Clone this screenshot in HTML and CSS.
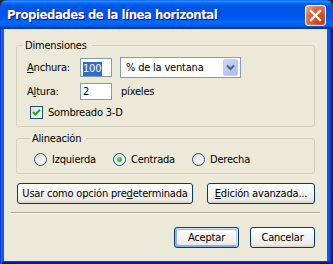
FILE: index.html
```html
<!DOCTYPE html>
<html lang="es">
<head>
<meta charset="utf-8">
<title>Propiedades de la línea horizontal</title>
<link rel="stylesheet" href="styles.css">
</head>
<body>
<div class="window">
  <div class="titlebar">
    <span class="title">Propiedades de la línea horizontal</span>
    <button class="close" aria-label="Cerrar"><svg width="19" height="19" viewBox="0 0 19 19"><path d="M5 5 L14 14 M14 5 L5 14" stroke="#fff" stroke-width="2.4" stroke-linecap="square"/></svg></button>
  </div>
  <div class="frame">
    <div class="client">
      <fieldset class="group group-dims">
        <legend>Dimensiones</legend>
        <div class="row row-width">
          <span class="lbl"><u>A</u>nchura:</span>
          <div class="edit"><span class="sel">100</span></div>
          <div class="combo">
            <span class="combo-text">% de la ventana</span>
            <span class="combo-btn"><svg width="9" height="7" viewBox="0 0 9 7"><path d="M1 1.5 L4.5 5 L8 1.5" fill="none" stroke="#4D6185" stroke-width="2"/></svg></span>
          </div>
        </div>
        <div class="row row-height">
          <span class="lbl">A<u>l</u>tura:</span>
          <div class="edit edit-small">2</div>
          <span class="unit">píxeles</span>
        </div>
        <div class="row row-check">
          <span class="checkbox"><svg width="11" height="11" viewBox="0 0 11 11"><path d="M2 5 L4.3 7.5 L9 2.8" fill="none" stroke="#21A121" stroke-width="2"/></svg></span>
          <span class="check-label">Sombreado 3-D</span>
        </div>
      </fieldset>
      <fieldset class="group group-align">
        <legend>Alineación</legend>
        <div class="radios">
          <span class="radio-item"><span class="radio"></span>Izquierda</span>
          <span class="radio-item"><span class="radio checked"></span>Centrada</span>
          <span class="radio-item"><span class="radio"></span>Derecha</span>
        </div>
      </fieldset>
      <div class="btn-row">
        <button class="btn btn-wide">Usar como opción pre<u>d</u>eterminada</button>
        <button class="btn btn-adv"><u>E</u>dición avanzada...</button>
      </div>
      <div class="separator"></div>
      <div class="footer">
        <button class="btn btn-small btn-default">Aceptar</button>
        <button class="btn btn-small">Cancelar</button>
      </div>
    </div>
  </div>
</div>
</body>
</html>
```
FILE: styles.css
```css
* { box-sizing: border-box; }
html, body { margin: 0; padding: 0; }
body {
  width: 333px;
  height: 264px;
  overflow: hidden;
  background: #2a2a2a;
  font-family: "DejaVu Sans Condensed", "DejaVu Sans", sans-serif;
  font-size: 11px;
  line-height: 13px;
  letter-spacing: -0.2px;
  color: #000;
}
u { text-decoration: underline; text-underline-offset: 1px; text-decoration-thickness: 1px; }

.window {
  width: 333px;
  height: 264px;
  display: flex;
  flex-direction: column;
  border-radius: 7px 7px 0 0;
  overflow: hidden;
}

.titlebar {
  height: 29px;
  flex: none;
  display: flex;
  align-items: center;
  padding: 1px 7px 0 7px;
  background: linear-gradient(180deg, #0058EE 0%, #3593FF 4%, #288EFF 6%, #127DFF 8%, #036FFC 10%, #0262EE 14%, #0057E5 20%, #0054E3 24%, #0055EB 56%, #005BF5 66%, #026AFE 76%, #0062EF 86%, #0052D6 92%, #0040AB 94%, #003092 100%);
}
.title {
  font-family: "DejaVu Sans Condensed", "DejaVu Sans", sans-serif;
  font-weight: bold;
  font-size: 13px;
  line-height: 16px;
  letter-spacing: -0.45px;
  color: #fff;
  text-shadow: 1px 1px #0F1089;
  white-space: nowrap;
}
.close {
  margin-left: auto;
  width: 21px;
  height: 21px;
  padding: 0;
  border: 1px solid #fff;
  border-radius: 3px;
  display: flex;
  align-items: center;
  justify-content: center;
  background: radial-gradient(circle at 85% 85%, #C43A10 0%, #D8532A 40%, #E27048 70%, #F5B59A 100%);
  box-shadow: inset 0 0 2px rgba(255,255,255,0.4);
}

.frame {
  flex: 1;
  display: flex;
  padding: 0 6px 3px 4px;
  background: #0A5BE6;
  box-shadow: inset 1px 0 #0831D9, inset 2px 0 #166AEE, inset -1px -1px #00138C, inset -2px -2px #001EA0, inset -3px -3px #003BDA, inset -4px 0 #0855DD;
}
.client {
  flex: 1;
  background: #ECE9D8;
  padding: 10px 12px 13px 12px;
  display: flex;
  flex-direction: column;
}

.group {
  margin: 0;
  min-width: 0;
  border: 1px solid #D0D0BF;
  border-radius: 3px;
  padding: 5px 10px 7px 10px;
}
.group legend {
  padding: 0 5px 0 2px;
  margin-left: -4px;
  line-height: 13px;
}
.group-align {
  margin-top: 5px;
  padding: 8px 10px 7px 17px;
}

.row { display: flex; align-items: center; }
.row-width { height: 21px; }
.row-height { height: 17px; margin-top: 5px; }
.row-check { height: 13px; margin-top: 6px; padding-left: 3px; }

.lbl { width: 53px; flex: none; }
.edit {
  width: 32px;
  height: 19px;
  flex: none;
  border: 1px solid #7F9DB9;
  background: #fff;
  padding: 3px 0 0 2px;
  line-height: 14px;
}
.sel {
  display: inline-block;
  height: 14px;
  background: #316AC5;
  color: #fff;
  padding: 0 1px 0 0;
}
.edit-small {
  height: 17px;
  padding: 1px 0 0 2px;
  line-height: 13px;
}
.unit { margin-left: 9px; }

.combo {
  margin-left: 8px;
  width: 121px;
  height: 21px;
  flex: none;
  border: 1px solid #7F9DB9;
  background: #fff;
  display: flex;
  align-items: center;
  padding: 1px 2px 1px 5px;
}
.combo-text { flex: 1; white-space: nowrap; }
.combo-btn {
  width: 15px;
  height: 17px;
  flex: none;
  border-radius: 2px;
  border: 1px solid #BDD0F8;
  background: linear-gradient(135deg, #C9D8FC 0%, #B6C9F7 50%, #A9BFF3 100%);
  display: flex;
  align-items: center;
  justify-content: center;
}

.checkbox {
  width: 13px;
  height: 13px;
  flex: none;
  border: 1px solid #1C5180;
  background: linear-gradient(135deg, #DCDCD7 0%, #FFFFFF 100%);
  display: flex;
  align-items: center;
  justify-content: center;
}
.check-label { margin-left: 5px; }

.radios { display: flex; align-items: center; height: 13px; gap: 17px; }
.radio-item { display: flex; align-items: center; white-space: nowrap; }
.radio {
  width: 13px;
  height: 13px;
  flex: none;
  margin-right: 5px;
  border: 1px solid #1C5180;
  border-radius: 50%;
  background: linear-gradient(135deg, #DCDCD7 0%, #FFFFFF 100%);
  display: flex;
  align-items: center;
  justify-content: center;
}
.radio.checked::after {
  content: "";
  width: 5px;
  height: 5px;
  border-radius: 50%;
  background: radial-gradient(circle at 40% 40%, #7BE07A 0%, #29B229 60%, #0E8E0E 100%);
}

.btn {
  height: 21px;
  padding: 0;
  border: 1px solid #003C74;
  border-radius: 3px;
  background: linear-gradient(180deg, #FFFFFF 0%, #ECEBE5 86%, #D8D0C4 100%);
  font-family: inherit;
  font-size: 11px;
  line-height: 13px;
  letter-spacing: -0.2px;
  color: #000;
  white-space: nowrap;
}
.btn-row {
  margin-top: 9px;
  display: flex;
  justify-content: space-between;
  padding-left: 1px;
}
.btn-wide { width: 176px; }
.btn-adv { width: 108px; }

.separator {
  margin: 8px -5px 0 -5px;
  height: 2px;
  border-top: 1px solid #ACA899;
  border-bottom: 1px solid #FFFFFF;
}
.footer {
  margin-top: 13px;
  display: flex;
  justify-content: flex-end;
  gap: 11px;
}
.btn-small { width: 65px; }
.btn-default {
  box-shadow: inset -1px 1px #CEE7FF, inset 1px 2px #98B8EA, inset -2px 2px #BCD4F6, inset 1px -1px #89ADE4, inset 2px -2px #89ADE4;
}
```
